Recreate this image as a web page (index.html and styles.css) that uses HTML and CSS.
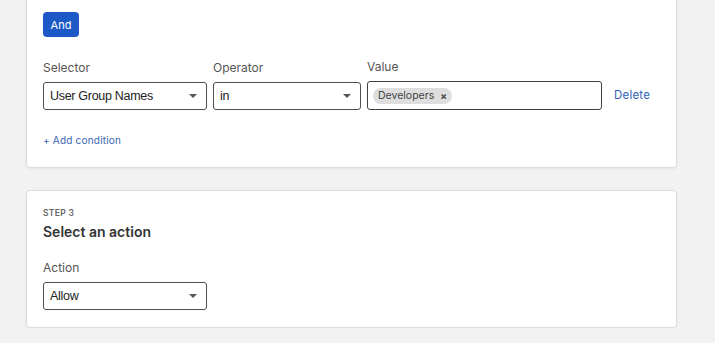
FILE: index.html
```html
<!DOCTYPE html>
<html lang="en">
<head>
    <meta charset="UTF-8">
    <meta name="viewport" content="width=device-width, initial-scale=1.0">
    <title>Rule Builder</title>
    <link rel="stylesheet" href="styles.css">
</head>
<body>
    <div class="page">
        <section class="card card-conditions">
            <button class="btn-and" type="button">And</button>

            <div class="condition-row">
                <div class="field">
                    <label class="field-label">Selector</label>
                    <div class="select select-selector">
                        <span class="select-value">User Group Names</span>
                        <span class="caret"></span>
                    </div>
                </div>
                <div class="field">
                    <label class="field-label">Operator</label>
                    <div class="select select-operator">
                        <span class="select-value">in</span>
                        <span class="caret"></span>
                    </div>
                </div>
                <div class="field">
                    <label class="field-label">Value</label>
                    <div class="tag-input">
                        <span class="chip">Developers <span class="chip-x">&times;</span></span>
                    </div>
                </div>
                <a class="link-delete" href="#">Delete</a>
            </div>

            <a class="link-add" href="#">+ Add condition</a>
        </section>

        <section class="card card-action">
            <div class="step">STEP 3</div>
            <h2 class="card-title">Select an action</h2>
            <div class="field">
                <label class="field-label">Action</label>
                <div class="select select-selector">
                    <span class="select-value">Allow</span>
                    <span class="caret"></span>
                </div>
            </div>
        </section>
    </div>
</body>
</html>
```

FILE: styles.css
```css
body {
    margin: 0;
    padding: 0;
    background-color: #f2f2f2;
    font-family: Inter, "Noto Sans", sans-serif;
    color: #333;
}

.page {
    padding: 0 38px 0 26px;
    width: 651px;
}

.card {
    background-color: #fff;
    border: 1px solid #dcdcdc;
    border-radius: 4px;
    box-shadow: 0 1px 3px rgba(0, 0, 0, 0.06);
    padding: 16px;
}

.card-conditions {
    margin-top: -12px;
    padding-top: 23px;
    padding-bottom: 20px;
}

.card-action {
    margin-top: 22px;
    padding-bottom: 17px;
}

.btn-and {
    display: block;
    width: 36px;
    height: 25px;
    padding: 0;
    border: none;
    border-radius: 4px;
    background-color: #1c58c6;
    color: #fff;
    font-family: Inter, sans-serif;
    font-size: 11px;
}

.condition-row {
    display: flex;
    align-items: flex-end;
    gap: 6px;
    margin-top: 22px;
}

.field {
    display: flex;
    flex-direction: column;
}

.field-label {
    font-size: 12px;
    line-height: 16px;
    color: #555;
    margin-bottom: 6px;
}

.select {
    box-sizing: border-box;
    display: flex;
    align-items: center;
    justify-content: space-between;
    height: 28px;
    padding: 0 9px 0 6px;
    border: 1.5px solid #505050;
    border-radius: 3px;
    font-family: "Liberation Sans", Arial, sans-serif;
    font-size: 12.5px;
    letter-spacing: -0.3px;
    color: #222;
}

.select-selector {
    width: 164px;
}

.select-operator {
    width: 148px;
}

.caret {
    width: 0;
    height: 0;
    border-left: 4px solid transparent;
    border-right: 4px solid transparent;
    border-top: 4px solid #555;
}

.tag-input {
    box-sizing: border-box;
    display: flex;
    align-items: center;
    width: 235px;
    height: 29px;
    padding: 0 5px;
    border: 1.5px solid #404040;
    border-radius: 3px;
}

.chip {
    display: inline-flex;
    align-items: center;
    height: 16px;
    padding: 0 5px;
    border-radius: 8px;
    background-color: #dedede;
    font-size: 10.5px;
    color: #444;
}

.chip-x {
    margin-left: 6px;
    font-weight: bold;
    font-size: 10px;
}

.link-delete {
    margin-left: 6px;
    height: 29px;
    line-height: 29px;
    font-size: 11.5px;
    color: #2f62b6;
    text-decoration: none;
    letter-spacing: 0.2px;
}

.link-add {
    display: block;
    margin-top: 23px;
    font-size: 10px;
    line-height: 14px;
    color: #3a66b2;
    text-decoration: none;
    letter-spacing: 0.2px;
}

.step {
    font-size: 8.5px;
    line-height: 12px;
    font-weight: 600;
    color: #666;
    letter-spacing: 0.3px;
}

.card-title {
    margin: 3px 0 18px;
    font-size: 14px;
    line-height: 20px;
    font-weight: 600;
    color: #333;
}
```
